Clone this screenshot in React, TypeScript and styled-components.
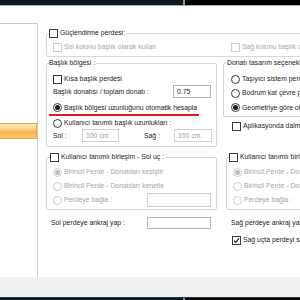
import React from 'react';
import styled, { createGlobalStyle } from 'styled-components';

const GlobalStyle = createGlobalStyle`
  html, body {
    margin: 0;
    padding: 0;
    background: #ffffff;
    overflow: hidden;
  }
  body {
    font-family: "Liberation Sans", "DejaVu Sans", sans-serif;
    font-size: 6.85px;
    color: #1a1a1a;
  }
`;

const Page = styled.div`
  width: 300px;
  height: 300px;
  display: flex;
  flex-direction: column;
  overflow: hidden;
`;

const Taskbar = styled.div<{ $top?: boolean }>`
  height: ${p => (p.$top ? 5 : 3)}px;
  display: flex;
  flex-shrink: 0;
  border-bottom: ${p => (p.$top ? '1px solid #a7adb0' : 'none')};
  border-top: ${p => (p.$top ? 'none' : '1px solid #2a363a')};
`;

const BarSegment = styled.div<{ $tone: 'teal' | 'sep' | 'black' }>`
  width: ${p => (p.$tone === 'teal' ? '183px' : p.$tone === 'sep' ? '2px' : 'auto')};
  flex: ${p => (p.$tone === 'black' ? 1 : 'none')};
  background: ${p => (p.$tone === 'teal' ? '#0b1b20' : p.$tone === 'sep' ? '#8b959a' : '#000000')};
`;

const Main = styled.div`
  height: 271px;
  display: flex;
  flex-shrink: 0;
`;

const SidePanel = styled.div`
  width: 38px;
  box-sizing: border-box;
  margin-top: 17px;
  border-top: 1px solid #cbcbcb;
  border-right: 1px solid #cbcbcb;
  flex-shrink: 0;
`;

const SelectedItem = styled.div`
  margin-top: 99px;
  height: 16px;
  box-sizing: border-box;
  border: 1px solid #e2a64e;
  border-left: none;
  background: linear-gradient(#fce4b2 0%, #fad38a 40%, #f7b64a 55%, #fbc868 100%);
`;

const Content = styled.div`
  width: 420px;
  flex-shrink: 0;
  padding: 22px 0 0 8px;
  white-space: nowrap;
`;

const Footer = styled.div`
  height: 20px;
  flex-shrink: 0;
  background: #f0f0f0;
`;

const Group = styled.fieldset<{ $pad: number; $width?: number; $shift?: number }>`
  margin: 0 0 0 ${p => p.$shift || 0}px;
  padding: 0 0 0 ${p => p.$pad}px;
  border: 1px solid #d6d6d6;
  border-radius: 2px;
  min-width: 0;
  width: ${p => (p.$width ? `${p.$width}px` : 'auto')};
  box-sizing: border-box;
`;

const Legend = styled.legend`
  padding: 0 1px 0 0;
  height: 10px;
  line-height: 10px;
`;

const LegendInner = styled.span`
  display: flex;
  align-items: center;
  gap: 2px;
  height: 10px;
`;

const GroupBody = styled.div<{ $top: number; $bottom: number; $left: number }>`
  padding: ${p => p.$top}px 5px ${p => p.$bottom}px ${p => p.$left}px;
`;

const TopGrid = styled.div`
  display: grid;
  grid-template-columns: 178px auto;
  height: 14px;
  align-items: center;
`;

const Columns = styled.div`
  display: flex;
  gap: 6px;
  margin-top: 1px;
`;

const LeftColumn = styled.div`
  width: 171px;
  flex-shrink: 0;
`;

const RightColumn = styled.div`
  width: 200px;
  flex-shrink: 0;
`;

const Row = styled.div<{ $h: number; $mt?: number; $indent?: number }>`
  display: flex;
  align-items: center;
  gap: 2px;
  height: ${p => p.$h}px;
  margin-top: ${p => p.$mt || 0}px;
  padding-left: ${p => p.$indent || 0}px;
`;

const Marked = styled.div`
  margin: 3px 0 0 -4px;
  padding-left: 4px;
  width: 146px;
  height: 13px;
  display: flex;
  align-items: center;
  gap: 2px;
  border-bottom: 2px solid #e3151d;
`;

const Label = styled.span<{ $disabled?: boolean; $w?: number }>`
  color: ${p => (p.$disabled ? '#a6a6a6' : '#1a1a1a')};
  width: ${p => (p.$w ? `${p.$w}px` : 'auto')};
  flex-shrink: 0;
  line-height: 10px;
`;

const TextBox = styled.div<{ $w: number; $h: number; $disabled?: boolean; $auto?: boolean }>`
  width: ${p => p.$w}px;
  height: ${p => p.$h}px;
  box-sizing: border-box;
  border: 1px solid ${p => (p.$disabled ? '#cfcfcf' : '#b3b3b3')};
  background: #ffffff;
  color: ${p => (p.$disabled ? '#9d9d9d' : '#1a1a1a')};
  padding-left: 3px;
  display: flex;
  align-items: center;
  flex-shrink: 0;
  margin-left: ${p => (p.$auto ? 'auto' : '0')};
`;

const Spacer = styled.span<{ $w: number }>`
  width: ${p => p.$w}px;
  flex-shrink: 0;
`;

const Box = styled.span<{ $disabled?: boolean }>`
  width: 9px;
  height: 9px;
  box-sizing: border-box;
  border: 1px solid ${p => (p.$disabled ? '#cdcdcd' : '#3a3a3a')};
  background: #ffffff;
  display: inline-flex;
  align-items: center;
  justify-content: center;
  flex-shrink: 0;
`;

const Round = styled(Box)`
  border-radius: 50%;
`;

const Dot = styled.span<{ $disabled?: boolean }>`
  width: 5px;
  height: 5px;
  border-radius: 50%;
  background: ${p => (p.$disabled ? '#bcbcbc' : '#1b1b1b')};
`;

const Check = ({ checked, disabled }: { checked?: boolean; disabled?: boolean }) => (
  <Box $disabled={disabled}>
    {checked && (
      <svg width="7" height="7" viewBox="0 0 7 7">
        <path d="M1 3.6 L2.8 5.4 L6 1.4" fill="none" stroke="#1b1b1b" strokeWidth="1.1" />
      </svg>
    )}
  </Box>
);

const Radio = ({ checked, disabled }: { checked?: boolean; disabled?: boolean }) => (
  <Round $disabled={disabled}>{checked && <Dot $disabled={disabled} />}</Round>
);

const JoinGroup = ({ side, shift, pad }: { side: string; shift?: number; pad: number }) => (
  <Group $pad={pad} $shift={shift} $width={shift ? 180 : undefined}>
    <Legend>
      <LegendInner>
        <Check />
        <Label>Kullanıcı tanımlı birleşim - {side} uç :</Label>
      </LegendInner>
    </Legend>
    <GroupBody $top={3} $bottom={2} $left={6 - pad}>
      <Row $h={14}>
        <Radio checked disabled />
        <Label $disabled>Birincil Perde - Donatıları kesiştir</Label>
      </Row>
      <Row $h={14}>
        <Radio disabled />
        <Label $disabled>Birincil Perde - Donatıları kenetle</Label>
      </Row>
      <Row $h={14}>
        <Radio disabled />
        <Label $disabled>Perdeye bağla :</Label>
        <TextBox $w={64} $h={14} $disabled $auto />
      </Row>
    </GroupBody>
  </Group>
);

const Stack = styled.div<{ $mt: number }>`
  margin-top: ${p => p.$mt}px;
`;

const App: React.FC = () => (
  <Page>
    <GlobalStyle />
    <Taskbar $top>
      <BarSegment $tone="teal" />
      <BarSegment $tone="sep" />
      <BarSegment $tone="black" />
    </Taskbar>
    <Main>
      <SidePanel>
        <SelectedItem />
      </SidePanel>
      <Content>
        <Group $pad={2}>
          <Legend>
            <LegendInner>
              <Check />
              <Label>Güçlendirme perdesi:</Label>
            </LegendInner>
          </Legend>
          <GroupBody $top={2} $bottom={2} $left={4}>
            <TopGrid>
              <Row $h={14}>
                <Check disabled />
                <Label $disabled>Sol kolonu başlık olarak kullan</Label>
              </Row>
              <Row $h={14}>
                <Check disabled />
                <Label $disabled>Sağ kolonu başlık olarak kullan</Label>
              </Row>
            </TopGrid>
          </GroupBody>
        </Group>

        <Columns>
          <LeftColumn>
            <Group $pad={2}>
              <Legend>
                <LegendInner>
                  <Label>Başlık bölgesi :</Label>
                </LegendInner>
              </Legend>
              <GroupBody $top={5} $bottom={4} $left={4}>
                <Row $h={12}>
                  <Check />
                  <Label>Kısa başlık perdesi</Label>
                </Row>
                <Row $h={13}>
                  <Label>Başlık donatısı / toplam donatı :</Label>
                  <TextBox $w={38} $h={13} $auto>0.75</TextBox>
                </Row>
                <Marked>
                  <Radio checked />
                  <Label>Başlık bölgesi uzunluğunu otomatik hesapla</Label>
                </Marked>
                <Row $h={12} $mt={1}>
                  <Radio />
                  <Label>Kullanıcı tanımlı başlık uzunlukları :</Label>
                </Row>
                <Row $h={13}>
                  <Label $w={27}>Sol :</Label>
                  <TextBox $w={37} $h={13} $disabled>100 cm</TextBox>
                  <Spacer $w={21} />
                  <Label $w={28}>Sağ :</Label>
                  <TextBox $w={38} $h={13} $disabled $auto>100 cm</TextBox>
                </Row>
              </GroupBody>
            </Group>

            <Stack $mt={5}>
              <JoinGroup side="Sol" pad={3} />
            </Stack>

            <Row $h={12} $mt={7} $indent={5}>
              <Label>Sol perdeye ankraj yap :</Label>
              <TextBox $w={64} $h={12} $auto style={{ marginRight: 6 }} />
            </Row>
          </LeftColumn>

          <RightColumn>
            <Group $pad={3}>
              <Legend>
                <LegendInner>
                  <Label>Donatı tasarım seçenekleri</Label>
                </LegendInner>
              </Legend>
              <GroupBody $top={4} $bottom={1} $left={4}>
                <Row $h={14}>
                  <Radio />
                  <Label>Taşıyıcı sistem perdesi</Label>
                </Row>
                <Row $h={14}>
                  <Radio />
                  <Label>Bodrum kat çevre perdesi</Label>
                </Row>
                <Row $h={15}>
                  <Radio checked />
                  <Label>Geometriye göre otomatik</Label>
                </Row>
              </GroupBody>
            </Group>

            <Row $h={14} $mt={2} $indent={9}>
              <Check />
              <Label>Aplikasyonda dalmaları göster</Label>
            </Row>

            <Stack $mt={19}>
              <JoinGroup side="Sağ" shift={3} pad={2} />
            </Stack>

            <Row $h={12} $mt={7} $indent={8}>
              <Label>Sağ perdeye ankraj yap :</Label>
            </Row>
            <Row $h={12} $mt={5} $indent={9}>
              <Check checked />
              <Label>Sağ uçta perdeyi sil</Label>
            </Row>
          </RightColumn>
        </Columns>
      </Content>
    </Main>
    <Footer />
    <Taskbar>
      <BarSegment $tone="teal" />
      <BarSegment $tone="sep" />
      <BarSegment $tone="black" />
    </Taskbar>
  </Page>
);

export default App;
